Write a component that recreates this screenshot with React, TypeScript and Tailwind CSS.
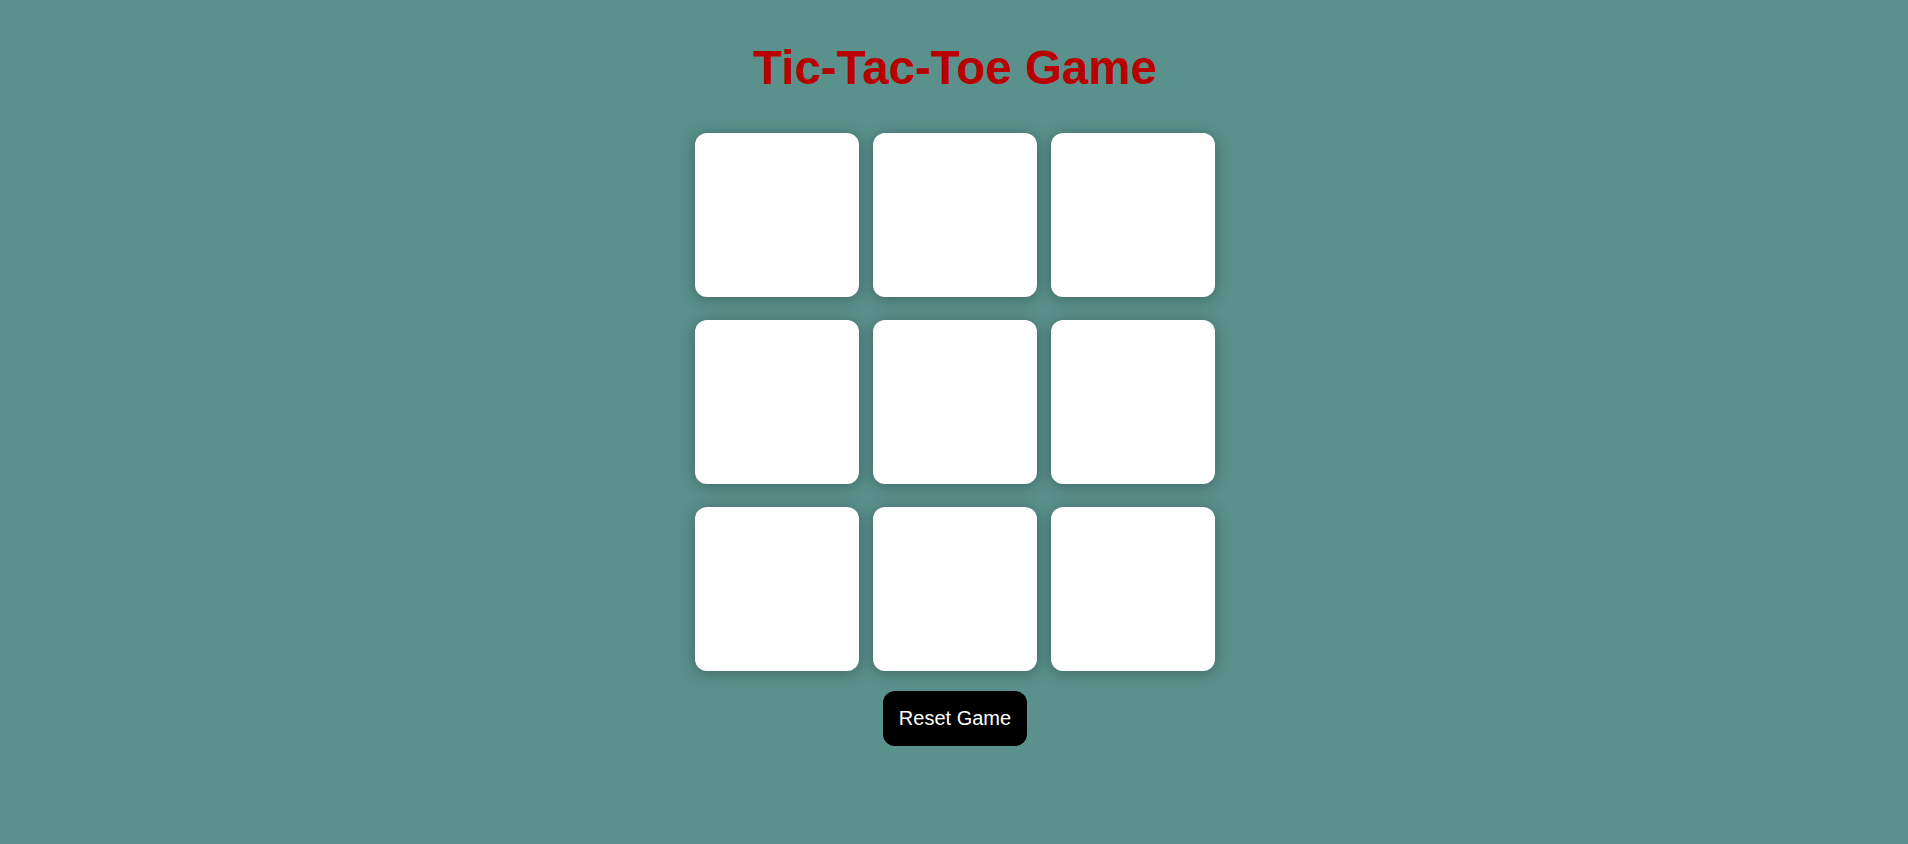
import { useState } from "react";

const App = () => {
    const [board, setBoard] = useState<string[]>(Array(9).fill(""));
    const [turn, setTurn] = useState("X");

    const play = (i: number) => {
        if (board[i]) return;
        const next = [...board];
        next[i] = turn;
        setBoard(next);
        setTurn(turn === "X" ? "O" : "X");
    };

    const reset = () => {
        setBoard(Array(9).fill(""));
        setTurn("X");
    };

    return (
        <div className="min-h-screen w-full bg-[#5a918c] flex flex-col items-center pt-[44px] pl-[2px] font-['Liberation_Sans',Arial,sans-serif]">
            <h1 className="text-[47.5px] leading-none font-bold text-[#b80000]">Tic-Tac-Toe Game</h1>
            <div className="mt-[41px] grid grid-cols-3 gap-x-[14px] gap-y-[23px]">
                {board.map((cell, i) => (
                    <button
                        key={i}
                        onClick={() => play(i)}
                        className="w-[164px] h-[164px] bg-white rounded-xl shadow-[0_2px_16px_rgba(0,0,0,0.3)] text-6xl font-bold text-black flex items-center justify-center">
                        {cell}
                    </button>
                ))}
            </div>
            <button
                onClick={reset}
                className="mt-[20px] bg-black text-white text-[20px] leading-[23px] px-4 py-4 rounded-xl">
                Reset Game
            </button>
        </div>
    );
};

export default App;
